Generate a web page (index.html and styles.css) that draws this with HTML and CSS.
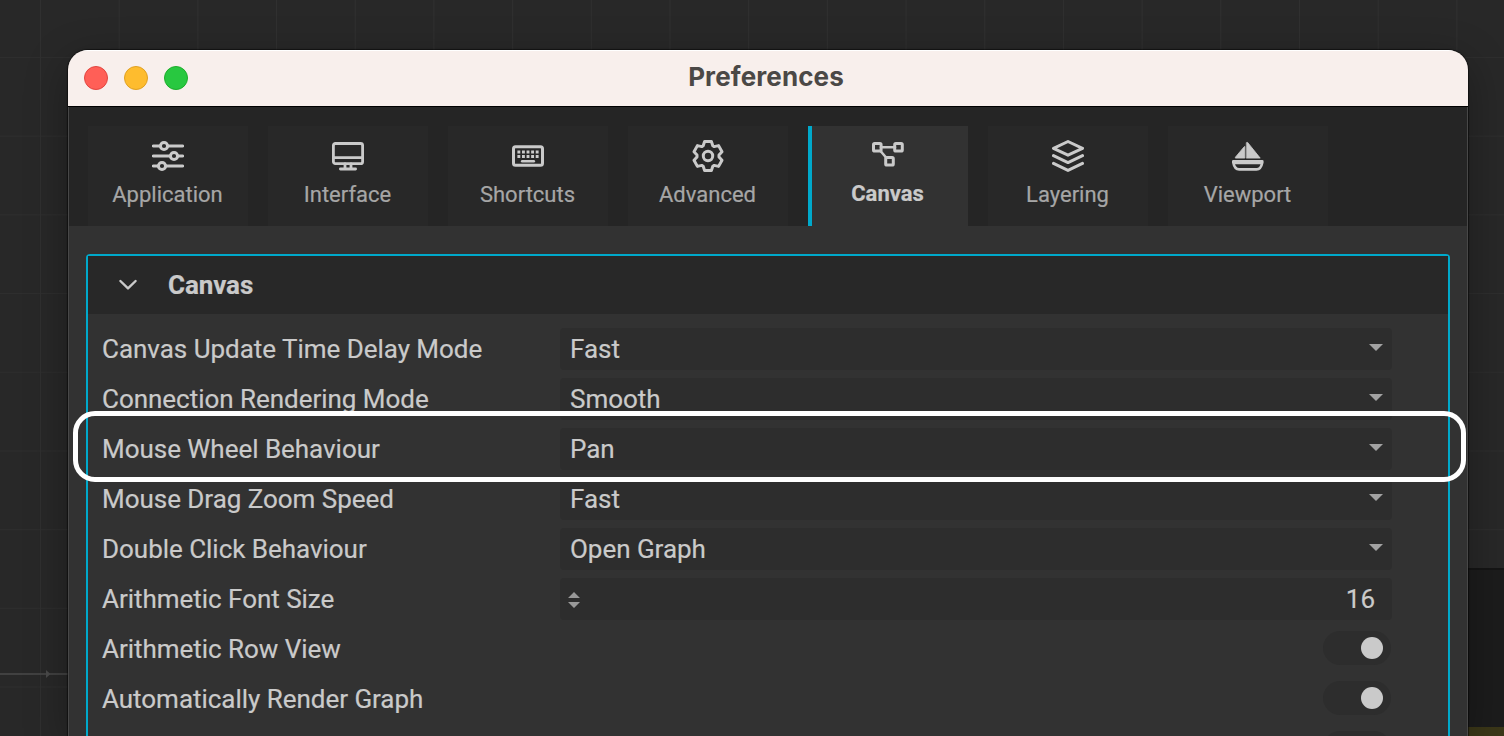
FILE: index.html
```
<!DOCTYPE html>
<html lang="en">
<head>
<meta charset="utf-8">
<title>Preferences</title>
<link rel="stylesheet" href="styles.css">
</head>
<body>
<div class="backdrop">
  <svg class="wire" viewBox="0 0 68 12"><path d="M0 6H68" stroke="#4a4a4a" stroke-width="1.6"/><path d="M46 2 50.5 6 46 10Z" fill="#4a4a4a"/></svg>
  <div class="side-pane"></div>
</div>
<main class="window">
  <header class="titlebar">
    <div class="lights"><i class="light red"></i><i class="light yellow"></i><i class="light green"></i></div>
    <h1 class="title">Preferences</h1>
  </header>
  <nav class="tabs">
    <div class="tab">
      <svg class="icon" viewBox="0 0 32 32"><path d="M1.4 6H8M16 6H30.6M1.4 16H18M26 16H30.6M1.4 26H6M14 26H30.6"/><circle cx="12" cy="6" r="3.6"/><circle cx="22" cy="16" r="3.6"/><circle cx="10" cy="26" r="3.6"/></svg>
      <span>Application</span>
    </div>
    <div class="tab">
      <svg class="icon thin" viewBox="0 0 32 32"><rect x="1.4" y="3.5" width="29.2" height="20.2" rx="2"/><path d="M1.4 17.7H30.6M13 24V28M19 24V28M8.4 29H23.6"/></svg>
      <span>Interface</span>
    </div>
    <div class="tab">
      <svg class="icon" viewBox="0 0 32 32"><rect x="1.5" y="6.7" width="29" height="18.6" rx="2"/><path class="keys" d="M5.4 12H26.6M5.4 16.5H26.6" /><path class="space" d="M10.2 21.2H21.8"/></svg>
      <span>Shortcuts</span>
    </div>
    <div class="tab">
      <svg class="icon" viewBox="0 0 32 32"><path d="M12.6 1.5H19.4L20.8 5.8 22.2 6.6 26.6 5.6 30 11.8 27 15V17L30 20.2 26.6 26.4 22.2 25.4 20.8 26.2 19.4 30.5H12.6L11.2 26.2 9.8 25.4 5.4 26.4 2 20.2 5 17V15L2 11.8 5.4 5.6 9.8 6.6 11.2 5.8Z"/><circle cx="16" cy="16" r="4.7"/></svg>
      <span>Advanced</span>
    </div>
    <div class="tab active">
      <svg class="icon" viewBox="0 0 32 32"><rect x="1.5" y="4.5" width="7.6" height="7.6" rx="1.2"/><rect x="22.7" y="4.5" width="7.6" height="7.6" rx="1.2"/><rect x="13.7" y="18.5" width="7.6" height="7.6" rx="1.2"/><path class="link" d="M9 8.3H23M8.5 12 14.5 19"/></svg>
      <span>Canvas</span>
    </div>
    <div class="tab">
      <svg class="icon" viewBox="0 0 32 32"><path d="M16 1.5 30.5 8.3 16 15.2 1.5 8.3Z"/><path d="M1.5 15.6 16 22.6 30.5 15.6M1.5 23.4 16 30.4 30.5 23.4"/></svg>
      <span>Layering</span>
    </div>
    <div class="tab">
      <svg class="icon thin" viewBox="0 0 32 32"><path class="solid" d="M14.7 2.6 15.6 2.4 28.2 18.1H14.7ZM12.8 6.8V18.1H3.4V17.2L11.8 7.2Z"/><path class="hull" d="M1.3 21.2H30.3V22.5Q29 29.4 24.5 29.4H7.2Q2.5 29.4 1.3 22.5ZM3 23H28.6"/></svg>
      <span>Viewport</span>
    </div>
  </nav>
  <section class="content">
    <div class="panel">
      <div class="panel-head">
        <svg class="chevron" viewBox="0 0 20 12"><path d="M2.4 2 10 9.4 17.6 2"/></svg>
        <h2>Canvas</h2>
      </div>
      <div class="rows">
        <div class="row"><label>Canvas Update Time Delay Mode</label><div class="field"><span>Fast</span><i class="caret"></i></div></div>
        <div class="row"><label>Connection Rendering Mode</label><div class="field"><span>Smooth</span><i class="caret"></i></div></div>
        <div class="row"><label>Mouse Wheel Behaviour</label><div class="field"><span>Pan</span><i class="caret"></i></div><div class="highlight"></div></div>
        <div class="row"><label>Mouse Drag Zoom Speed</label><div class="field"><span>Fast</span><i class="caret"></i></div></div>
        <div class="row"><label>Double Click Behaviour</label><div class="field"><span>Open Graph</span><i class="caret"></i></div></div>
        <div class="row"><label>Arithmetic Font Size</label><div class="field number"><svg class="spin" viewBox="0 0 12 16"><path d="M0 6 6 0 12 6ZM0 10H12L6 16Z"/></svg><span>16</span></div></div>
        <div class="row"><label>Arithmetic Row View</label><div class="toggle"></div></div>
        <div class="row"><label>Automatically Render Graph</label><div class="toggle"></div></div>
        <div class="row"><label></label><div class="toggle"></div></div>
      </div>
    </div>
  </section>
</main>
</body>
</html>
```
FILE: styles.css
```
* { box-sizing: border-box; }
html, body { height: 100%; }
body {
  margin: 0;
  overflow: hidden;
  background: #282828;
  color: #cacaca;
  font-family: Roboto, "Liberation Sans", sans-serif;
}
.backdrop {
  position: absolute;
  inset: 0;
  background-color: #282828;
  background-image:
    linear-gradient(90deg, #303030 1px, transparent 1px),
    linear-gradient(#2e2e2e 1px, transparent 1px);
  background-size: 78.7px 78.7px;
  background-position: 40px 57px;
}
.wire { position: absolute; left: 0; top: 668px; width: 68px; height: 12px; }
.side-pane {
  position: absolute;
  right: 0;
  top: 568px;
  width: 36px;
  height: 168px;
  background: linear-gradient(#1c1c1c 157px, #3b3718 157px);
  border-top: 2px solid #151515;
}
.window {
  position: relative;
  display: flex;
  flex-direction: column;
  width: 1400px;
  height: 686px;
  margin: 50px 0 0 68px;
  overflow: hidden;
  background: #323232;
  border-radius: 20px 20px 0 0;
  box-shadow: 0 0 1px 1px rgba(0, 0, 0, .5), 0 12px 44px rgba(0, 0, 0, .32);
}
.window::after {
  content: "";
  position: absolute;
  inset: 57px 0 0;
  border: solid #484848;
  border-width: 0 1px;
  pointer-events: none;
}
.titlebar {
  display: grid;
  grid-template-columns: 1fr auto 1fr;
  align-items: center;
  flex: none;
  height: 57px;
  padding: 0 16px;
  background: #f8efec;
  border-bottom: 1px solid #000;
  box-shadow: inset 0 1px #fff;
}
.lights { display: flex; gap: 16px; }
.light { width: 24px; height: 24px; border-radius: 50%; border: 1px solid; }
.red { background: #ff5f57; border-color: #e14640; }
.yellow { background: #febc2e; border-color: #dfa023; }
.green { background: #28c840; border-color: #1dad2b; }
.title { margin: 0 0 2px; padding-right: 4px; color: #4b4846; font: 700 26px/32px Inter, sans-serif; letter-spacing: .1px; }
.tabs {
  display: flex;
  flex: none;
  gap: 20px;
  height: 119px;
  padding: 19px 20px 0;
  background: #252525;
}
.tab {
  display: flex;
  flex-direction: column;
  align-items: center;
  width: 160px;
  padding-top: 14px;
  background: #282828;
  color: #a6a6a6;
  font-size: 22px;
  line-height: 26px;
}
.tab span { margin-top: 10px; padding-right: 1px; -webkit-text-stroke: .2px; }
.tab.active {
  padding: 13px 4px 0 0;
  background: #323232;
  border-left: 4px solid #00a9cb;
  color: #cacaca;
  font-weight: 700;
}
.icon { width: 32px; height: 32px; fill: none; stroke: #cacaca; stroke-width: 3; stroke-linecap: round; stroke-linejoin: round; }
.thin { stroke-width: 2.8; }
.icon .keys { stroke-width: 3; stroke-linecap: butt; stroke-dasharray: 2.9 1.68; }
.icon .space { stroke-width: 2.6; }
.icon .link { stroke-width: 2.6; }
.icon .hull { stroke-width: 2.6; }
.icon .solid { fill: #cacaca; stroke-width: .8; }
.content { display: flex; flex: 1; padding: 28px 18px 0; }
.panel { flex: 1; border: 2px solid #00a9cb; border-bottom: 0; border-radius: 4px 4px 0 0; }
.panel-head { display: flex; align-items: center; gap: 30px; height: 58px; padding-left: 30px; background: #282828; }
.panel-head h2 { margin: 0; font-size: 26px; line-height: 30px; font-weight: 700; letter-spacing: -.1px; -webkit-text-stroke: .2px; }
.chevron { width: 20px; height: 12px; fill: none; stroke: #cacaca; stroke-width: 2.4; stroke-linecap: round; stroke-linejoin: round; }
.rows { padding: 10px 56px 0 14px; }
.row { position: relative; display: flex; align-items: center; height: 50px; font-size: 26px; line-height: 30px; letter-spacing: -.03px; -webkit-text-stroke: .2px; }
.row label { width: 458px; white-space: nowrap; }
.field {
  display: flex;
  flex: 1;
  align-items: center;
  justify-content: space-between;
  height: 42px;
  padding: 0 9px 0 10px;
  background: #2d2d2d;
  border-radius: 4px;
}
.caret { margin-top: -3px; border: solid transparent; border-width: 7px 7px 0; border-top-color: #a3a3a3; }
.number { padding: 0 17px 0 8px; }
.spin { width: 12px; height: 16px; margin-top: 2px; fill: #999; }
.toggle {
  display: flex;
  align-items: center;
  justify-content: flex-end;
  width: 68px;
  height: 34px;
  margin: 0 1px 2px auto;
  padding-right: 8px;
  background: #2d2d2d;
  border-radius: 17px;
}
.toggle::after { content: ""; width: 22px; height: 22px; border-radius: 50%; background: #cacaca; }
.highlight {
  position: absolute;
  z-index: 1;
  left: -29px;
  top: -13px;
  width: 1393px;
  height: 71px;
  border: 5px solid #fff;
  border-radius: 22px;
}
```
